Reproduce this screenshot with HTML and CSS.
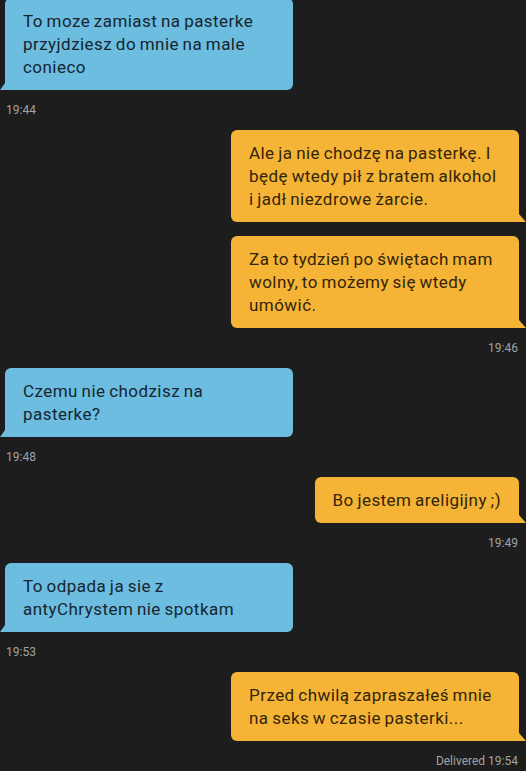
FILE: index.html
```html
<!DOCTYPE html>
<html lang="pl">
<head>
<meta charset="utf-8">
<title>Chat</title>
<link rel="stylesheet" href="styles.css">
</head>
<body>
<div class="chat">
  <div class="msg in first"><div class="bubble">To moze zamiast na pasterke przyjdziesz do mnie na male conieco</div></div>
  <div class="time in">19:44</div>

  <div class="msg out"><div class="bubble">Ale ja nie chodzę na pasterkę. I będę wtedy pił z bratem alkohol i jadł niezdrowe żarcie.</div></div>
  <div class="msg out next"><div class="bubble">Za to tydzień po świętach mam wolny, to możemy się wtedy umówić.</div></div>
  <div class="time out">19:46</div>

  <div class="msg in"><div class="bubble">Czemu nie chodzisz na pasterke?</div></div>
  <div class="time in">19:48</div>

  <div class="msg out"><div class="bubble">Bo jestem areligijny ;)</div></div>
  <div class="time out">19:49</div>

  <div class="msg in"><div class="bubble">To odpada ja sie z antyChrystem nie spotkam</div></div>
  <div class="time in">19:53</div>

  <div class="msg out"><div class="bubble">Przed chwilą zapraszałeś mnie na seks w czasie pasterki...</div></div>
  <div class="time out">Delivered 19:54</div>
</div>
</body>
</html>
```
FILE: styles.css
```css
html, body {
  margin: 0;
  padding: 0;
  background: #1d1d1d;
}
body {
  width: 526px;
  height: 771px;
  overflow: hidden;
  font-family: Roboto, "DejaVu Sans", sans-serif;
}
.chat {
  display: flex;
  flex-direction: column;
}
.msg {
  display: flex;
}
.msg.first {
  margin-top: -2px;
}
.msg.in {
  justify-content: flex-start;
  padding-left: 5px;
}
.msg.out {
  justify-content: flex-end;
  padding-right: 7px;
}
.msg.next {
  margin-top: 14px;
}
.bubble {
  position: relative;
  max-width: 252px;
  padding: 11.5px 18px;
  font-size: 17px;
  line-height: 23px;
  letter-spacing: 0.45px;
  word-spacing: -1px;
  border-radius: 6px;
}
.msg.in .bubble {
  background: #6cbde0;
  color: #16252f;
  border-bottom-left-radius: 0;
}
.msg.out .bubble {
  background: #f5b436;
  color: #33240a;
  border-bottom-right-radius: 0;
}
.bubble::after {
  content: "";
  position: absolute;
  bottom: 0;
  width: 0;
  height: 0;
  border-style: solid;
}
.msg.in .bubble::after {
  left: -5px;
  border-width: 0 0 7px 5px;
  border-color: transparent transparent #6cbde0 transparent;
}
.msg.out .bubble::after {
  right: -7px;
  border-width: 8px 0 0 7px;
  border-color: transparent transparent transparent #f5b436;
}
.time {
  font-size: 12px;
  line-height: 16px;
  color: #a3a3a3;
  margin: 12px 0;
}
.time.in {
  padding-left: 6px;
}
.time.out {
  text-align: right;
  padding-right: 8px;
}
```
